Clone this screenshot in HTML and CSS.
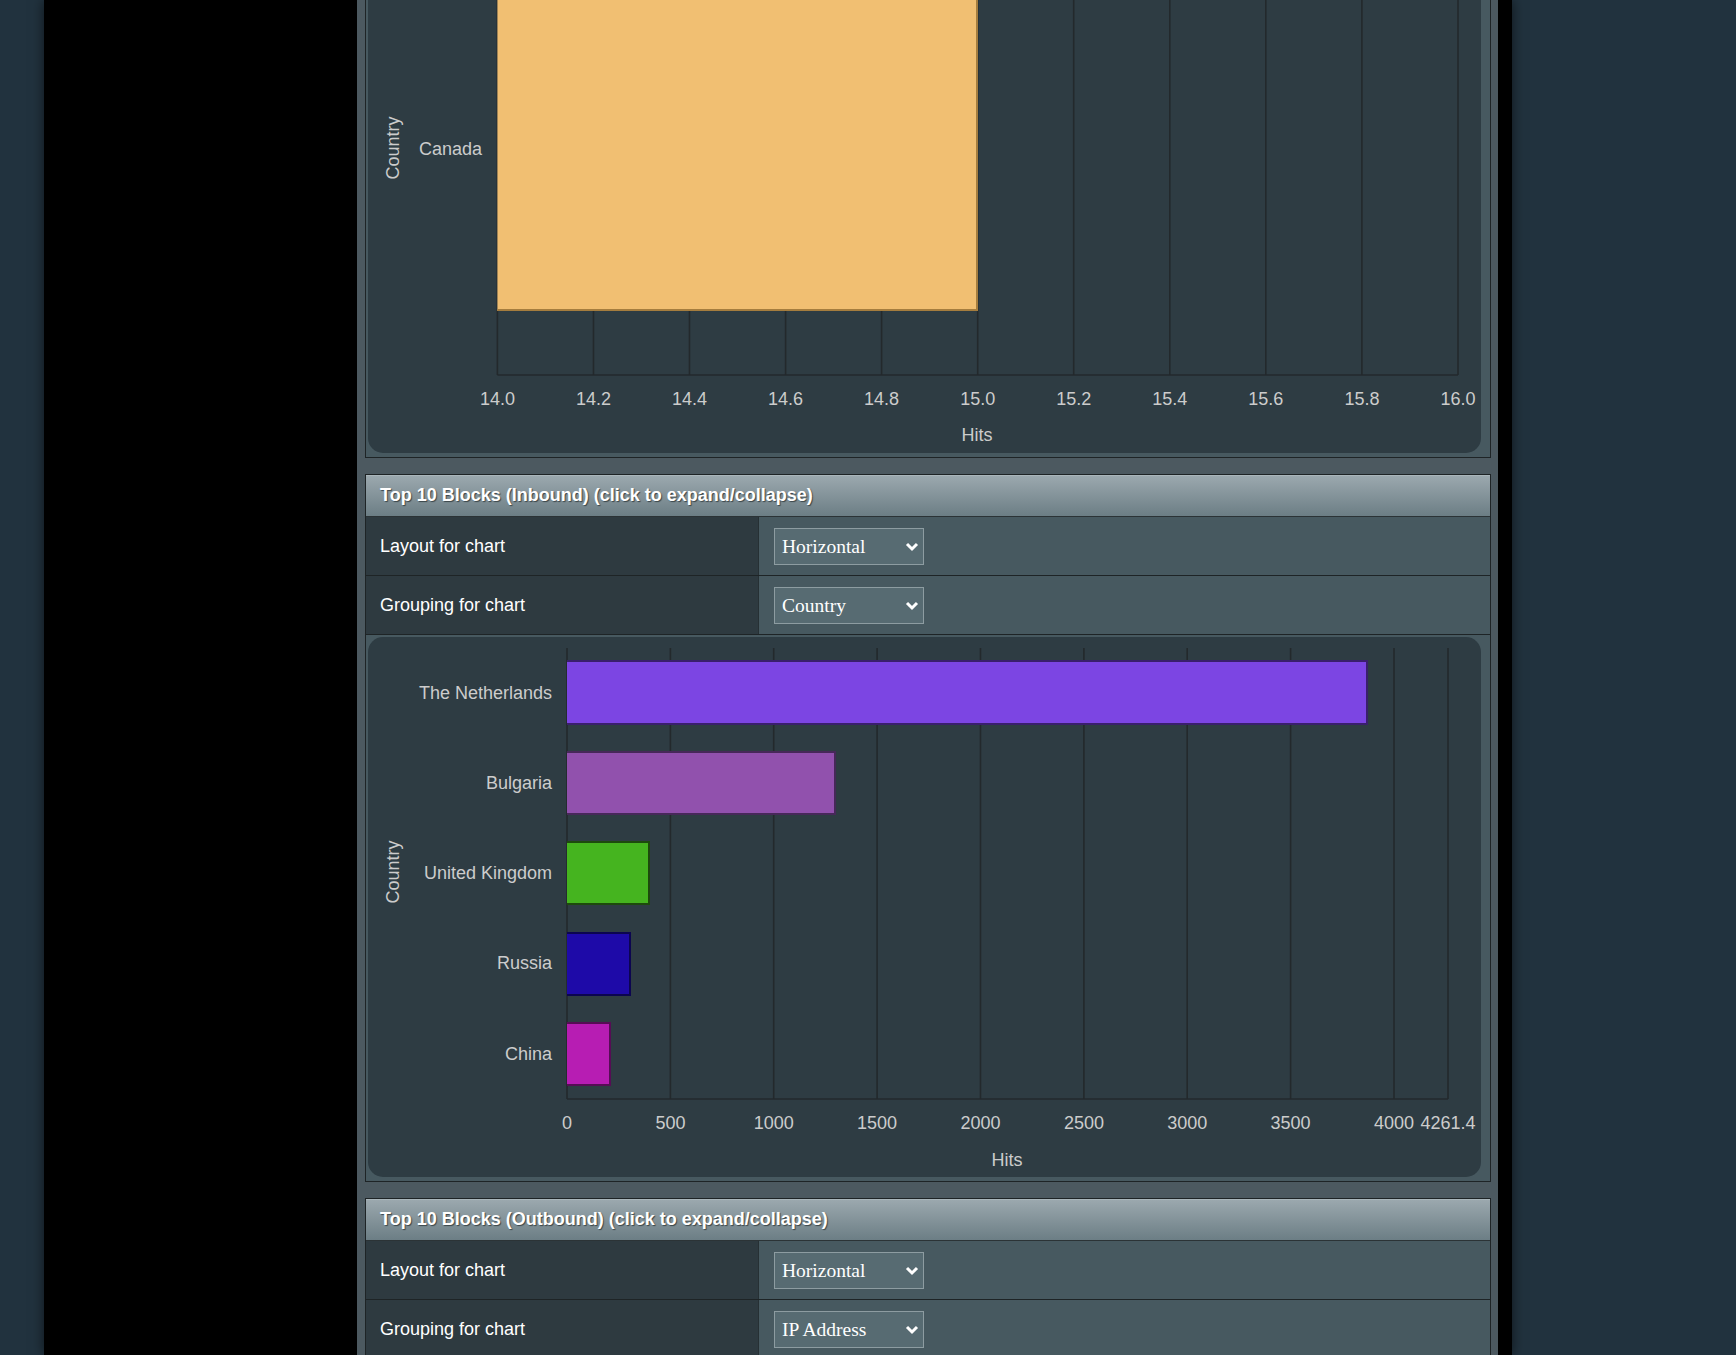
FILE: index.html
```html
<!DOCTYPE html>
<html>
<head>
<meta charset="utf-8">
<title>Firewall stats</title>
<link rel="stylesheet" href="styles.css">
</head>
<body>
<div class="frame">
  <div class="side"></div>
  <div class="content">
    <div class="section cut">
      <div class="chartcell top0">
        <div class="chartbox cutbox">
          <svg class="chart" width="1113" height="453" viewBox="0 0 1113 453">
            <g class="grid">
              <line x1="129.4" y1="0" x2="129.4" y2="375"/>
              <line x1="225.5" y1="0" x2="225.5" y2="375"/>
              <line x1="321.5" y1="0" x2="321.5" y2="375"/>
              <line x1="417.6" y1="0" x2="417.6" y2="375"/>
              <line x1="513.6" y1="0" x2="513.6" y2="375"/>
              <line x1="609.7" y1="0" x2="609.7" y2="375"/>
              <line x1="705.7" y1="0" x2="705.7" y2="375"/>
              <line x1="801.8" y1="0" x2="801.8" y2="375"/>
              <line x1="897.8" y1="0" x2="897.8" y2="375"/>
              <line x1="993.9" y1="0" x2="993.9" y2="375"/>
              <line x1="1090" y1="0" x2="1090" y2="375"/>
              <line x1="129.4" y1="375" x2="1090" y2="375"/>
            </g>
            <rect x="129.4" y="0" width="480.3" height="311" fill="#f1bf72"/>
            <path d="M129.4 310 H609 V0" class="edge" stroke="#a57d3e"/>
            <g class="lbl">
              <text x="114" y="154.5" text-anchor="end">Canada</text>
              <text x="129.4" y="404.5" text-anchor="middle">14.0</text>
              <text x="225.5" y="404.5" text-anchor="middle">14.2</text>
              <text x="321.5" y="404.5" text-anchor="middle">14.4</text>
              <text x="417.6" y="404.5" text-anchor="middle">14.6</text>
              <text x="513.6" y="404.5" text-anchor="middle">14.8</text>
              <text x="609.7" y="404.5" text-anchor="middle">15.0</text>
              <text x="705.7" y="404.5" text-anchor="middle">15.2</text>
              <text x="801.8" y="404.5" text-anchor="middle">15.4</text>
              <text x="897.8" y="404.5" text-anchor="middle">15.6</text>
              <text x="993.9" y="404.5" text-anchor="middle">15.8</text>
              <text x="1090" y="404.5" text-anchor="middle">16.0</text>
              <text x="609" y="441" text-anchor="middle">Hits</text>
              <text transform="translate(30.5,148) rotate(-90)" text-anchor="middle">Country</text>
            </g>
          </svg>
        </div>
      </div>
    </div>

    <div class="section">
      <div class="head">Top 10 Blocks (Inbound) (click to expand/collapse)</div>
      <div class="row">
        <div class="lab">Layout for chart</div>
        <div class="val">
          <span class="selwrap">
            <select class="sel"><option>Horizontal</option><option>Vertical</option></select>
            <svg class="chev" width="14" height="10" viewBox="0 0 14 10"><path d="M2 2 L7 7 L12 2"/></svg>
          </span>
        </div>
      </div>
      <div class="row">
        <div class="lab">Grouping for chart</div>
        <div class="val">
          <span class="selwrap">
            <select class="sel"><option>Country</option><option>IP Address</option><option>Port</option></select>
            <svg class="chev" width="14" height="10" viewBox="0 0 14 10"><path d="M2 2 L7 7 L12 2"/></svg>
          </span>
        </div>
      </div>
      <div class="chartcell">
        <div class="chartbox">
          <svg class="chart" width="1113" height="540" viewBox="0 0 1113 540">
            <g class="grid">
              <line x1="199" y1="11" x2="199" y2="462"/>
              <line x1="302.4" y1="11" x2="302.4" y2="462"/>
              <line x1="405.7" y1="11" x2="405.7" y2="462"/>
              <line x1="509.1" y1="11" x2="509.1" y2="462"/>
              <line x1="612.5" y1="11" x2="612.5" y2="462"/>
              <line x1="715.9" y1="11" x2="715.9" y2="462"/>
              <line x1="819.2" y1="11" x2="819.2" y2="462"/>
              <line x1="922.6" y1="11" x2="922.6" y2="462"/>
              <line x1="1026" y1="11" x2="1026" y2="462"/>
              <line x1="1080" y1="11" x2="1080" y2="462"/>
              <line x1="199" y1="462" x2="1080" y2="462"/>
            </g>
            <rect x="199" y="23" width="801" height="65" fill="#7c45e3"/>
            <path d="M199 24 H999 V87 H199" class="edge" stroke="#3a1f6c"/>
            <rect x="199" y="114" width="269" height="64" fill="#9151ad"/>
            <path d="M199 115 H467 V177 H199" class="edge" stroke="#472859"/>
            <rect x="199" y="204" width="83" height="64" fill="#45b41f"/>
            <path d="M199 205 H281 V267 H199" class="edge" stroke="#1d4a0d"/>
            <rect x="199" y="295" width="64" height="64" fill="#1e0aa8"/>
            <path d="M199 296 H262 V358 H199" class="edge" stroke="#0c0550"/>
            <rect x="199" y="385" width="44" height="64" fill="#b71db3"/>
            <path d="M199 386 H242 V448 H199" class="edge" stroke="#560d55"/>
            <g class="lbl">
              <text x="184" y="61.5" text-anchor="end">The Netherlands</text>
              <text x="184" y="151.5" text-anchor="end">Bulgaria</text>
              <text x="184" y="242" text-anchor="end">United Kingdom</text>
              <text x="184" y="332" text-anchor="end">Russia</text>
              <text x="184" y="422.5" text-anchor="end">China</text>
              <text x="199" y="492" text-anchor="middle">0</text>
              <text x="302.4" y="492" text-anchor="middle">500</text>
              <text x="405.7" y="492" text-anchor="middle">1000</text>
              <text x="509.1" y="492" text-anchor="middle">1500</text>
              <text x="612.5" y="492" text-anchor="middle">2000</text>
              <text x="715.9" y="492" text-anchor="middle">2500</text>
              <text x="819.2" y="492" text-anchor="middle">3000</text>
              <text x="922.6" y="492" text-anchor="middle">3500</text>
              <text x="1026" y="492" text-anchor="middle">4000</text>
              <text x="1080" y="492" text-anchor="middle">4261.4</text>
              <text x="639" y="528.5" text-anchor="middle">Hits</text>
              <text transform="translate(30.5,235) rotate(-90)" text-anchor="middle">Country</text>
            </g>
          </svg>
        </div>
      </div>
    </div>

    <div class="section">
      <div class="head">Top 10 Blocks (Outbound) (click to expand/collapse)</div>
      <div class="row">
        <div class="lab">Layout for chart</div>
        <div class="val">
          <span class="selwrap">
            <select class="sel"><option>Horizontal</option><option>Vertical</option></select>
            <svg class="chev" width="14" height="10" viewBox="0 0 14 10"><path d="M2 2 L7 7 L12 2"/></svg>
          </span>
        </div>
      </div>
      <div class="row">
        <div class="lab">Grouping for chart</div>
        <div class="val">
          <span class="selwrap">
            <select class="sel"><option>IP Address</option><option>Country</option><option>Port</option></select>
            <svg class="chev" width="14" height="10" viewBox="0 0 14 10"><path d="M2 2 L7 7 L12 2"/></svg>
          </span>
        </div>
      </div>
    </div>
  </div>
  <div class="rside"></div>
</div>
</body>
</html>
```

FILE: styles.css
```css
html, body {
  margin: 0;
  padding: 0;
}
body {
  background: #21323e;
  font-family: "Liberation Sans", Arial, sans-serif;
  height: 1355px;
  overflow: hidden;
}
.frame {
  display: flex;
  margin-left: 44px;
  width: 1468px;
  height: 1355px;
  background: #000;
  box-shadow: 0 0 12px rgba(0, 0, 0, 0.6);
}
.side {
  width: 313px;
  flex: none;
}
.content {
  width: 1141px;
  flex: none;
  box-sizing: border-box;
  background: #4c5960;
  padding: 0 7px 0 8px;
  display: flex;
  flex-direction: column;
  gap: 16px;
  overflow: hidden;
}
.rside {
  width: 14px;
  flex: none;
}
.section {
  border: 1px solid #1e2426;
  flex: none;
}
.section.cut {
  border-top: 0;
}
.head {
  height: 41px;
  border-bottom: 1px solid #2b3336;
  background: linear-gradient(#9ca9af, #6c7e85);
  box-shadow: inset 0 1px 0 #aab6bb;
  color: #fff;
  font-weight: bold;
  font-size: 18px;
  display: flex;
  align-items: center;
  padding-left: 14px;
  text-shadow: 1px 1px 1px #3a4549;
}
.row {
  display: grid;
  grid-template-columns: 393px 1fr;
  height: 59px;
  box-sizing: border-box;
  border-bottom: 1px solid #1e2426;
}
.lab {
  background: #2e3a40;
  color: #fff;
  font-size: 18px;
  display: flex;
  align-items: center;
  padding-left: 14px;
  border-right: 1px solid #263034;
}
.val {
  background: #475960;
  display: flex;
  align-items: center;
  padding-left: 15px;
}
.selwrap {
  position: relative;
  display: inline-block;
  width: 150px;
  height: 37px;
}
.sel {
  -webkit-appearance: none;
  appearance: none;
  width: 150px;
  height: 37px;
  box-sizing: border-box;
  background: #576b72;
  border: 1px solid #8d9ca1;
  border-radius: 0;
  color: #fff;
  font-family: "Liberation Serif", "Times New Roman", serif;
  font-size: 19.5px;
  padding: 0 0 0 7px;
  margin: 0;
  outline: none;
}
.chev {
  position: absolute;
  right: 5px;
  top: 14px;
  pointer-events: none;
}
.chev path {
  fill: none;
  stroke: #fff;
  stroke-width: 3;
}
.chartcell {
  background: #475960;
  padding: 2px 9px 4px 2px;
}
.chartcell.top0 {
  padding-top: 0;
}
.chartbox {
  background: #2e3c43;
  border-radius: 15px;
  overflow: hidden;
}
.chartbox.cutbox {
  border-radius: 0 0 15px 15px;
}
.chart {
  display: block;
}
.grid line {
  stroke: #23292c;
  stroke-width: 1.6;
}
.edge {
  fill: none;
  stroke-width: 2;
}
.lbl text {
  fill: #cccccc;
  font-family: "Liberation Sans", Arial, sans-serif;
  font-size: 18px;
}
```
